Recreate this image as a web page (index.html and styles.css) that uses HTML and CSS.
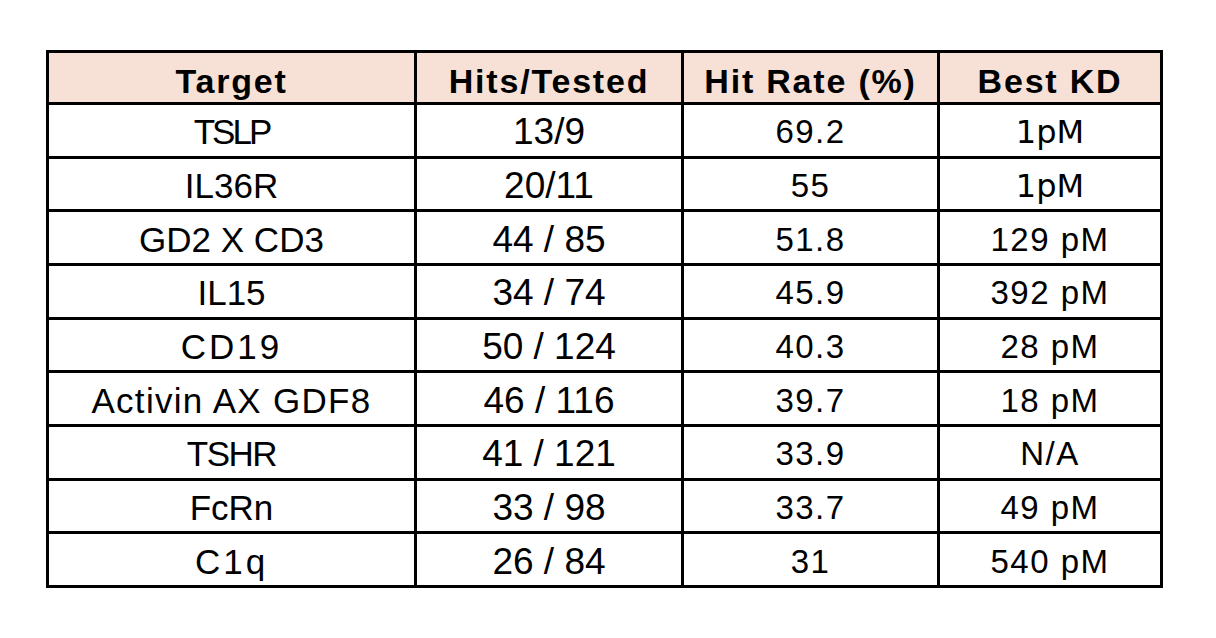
FILE: index.html
```html
<!DOCTYPE html>
<html lang="en">
<head>
<meta charset="utf-8">
<title>Target hit rates</title>
<link rel="stylesheet" href="styles.css">
</head>
<body>
<div class="page">
  <div class="grid">
    <div class="cell head">Target</div>
    <div class="cell head">Hits/Tested</div>
    <div class="cell head">Hit Rate (%)</div>
    <div class="cell head">Best KD</div>

    <div class="cell c1 narrow">TSLP</div>
    <div class="cell c2">13/9</div>
    <div class="cell c3">69.2</div>
    <div class="cell c4 alt">1pM</div>

    <div class="cell c1">IL36R</div>
    <div class="cell c2">20/11</div>
    <div class="cell c3">55</div>
    <div class="cell c4 alt">1pM</div>

    <div class="cell c1">GD2 X CD3</div>
    <div class="cell c2">44 / 85</div>
    <div class="cell c3">51.8</div>
    <div class="cell c4">129 pM</div>

    <div class="cell c1">IL15</div>
    <div class="cell c2">34 / 74</div>
    <div class="cell c3">45.9</div>
    <div class="cell c4">392 pM</div>

    <div class="cell c1 wide">CD19</div>
    <div class="cell c2">50 / 124</div>
    <div class="cell c3">40.3</div>
    <div class="cell c4">28 pM</div>

    <div class="cell c1 loose">Activin AX GDF8</div>
    <div class="cell c2">46 / 116</div>
    <div class="cell c3">39.7</div>
    <div class="cell c4">18 pM</div>

    <div class="cell c1 tight">TSHR</div>
    <div class="cell c2">41 / 121</div>
    <div class="cell c3">33.9</div>
    <div class="cell c4">N/A</div>

    <div class="cell c1">FcRn</div>
    <div class="cell c2">33 / 98</div>
    <div class="cell c3">33.7</div>
    <div class="cell c4">49 pM</div>

    <div class="cell c1 wide">C1q</div>
    <div class="cell c2">26 / 84</div>
    <div class="cell c3">31</div>
    <div class="cell c4">540 pM</div>
  </div>
</div>
</body>
</html>
```

FILE: styles.css
```css
html, body {
  margin: 0;
  padding: 0;
  background: #ffffff;
}

.page {
  padding: 50px 0 0 46px;
}

.grid {
  box-sizing: border-box;
  width: 1117px;
  height: 538px;
  background: #000000;
  padding: 3px;
  display: grid;
  grid-template-columns: 365px 264px 253px 220px;
  grid-template-rows: 49px repeat(9, 1fr);
  gap: 3px;
}

.cell {
  background: #ffffff;
  color: #000000;
  display: flex;
  align-items: center;
  justify-content: center;
  font-family: "Liberation Sans", Arial, sans-serif;
  font-size: 33px;
  letter-spacing: 1px;
  padding-top: 4px;
  box-sizing: border-box;
  white-space: nowrap;
}

.head {
  background: #f7e1d6;
  font-weight: bold;
  font-size: 34px;
  letter-spacing: 1.8px;
  padding-top: 8px;
}

.c1 {
  font-size: 35px;
  letter-spacing: 0;
}

.c1.narrow {
  letter-spacing: -3px;
}

.c1.tight {
  letter-spacing: -1.5px;
}

.c1.loose {
  letter-spacing: 1.3px;
}

.c1.wide {
  letter-spacing: 3px;
}

.c2 {
  font-size: 37px;
  letter-spacing: 0;
}

.c3 {
  letter-spacing: 1.5px;
}

.c4 {
  letter-spacing: 1.5px;
}

.c4.alt {
  font-family: "DejaVu Sans", sans-serif;
  font-size: 32px;
  letter-spacing: 0;
}
```
